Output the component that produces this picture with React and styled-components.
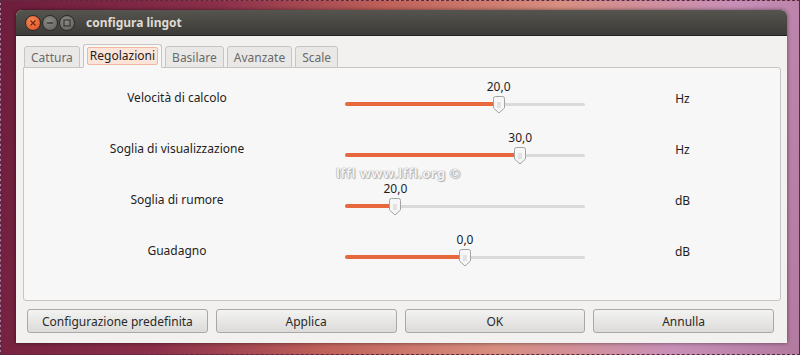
import React from 'react';
import styled, { createGlobalStyle } from 'styled-components';

const Global = createGlobalStyle`
  html, body { margin: 0; padding: 0; }
  body {
    width: 800px;
    height: 355px;
    overflow: hidden;
    font-family: "Noto Sans", "DejaVu Sans", sans-serif;
  }
`;

const Desktop = styled.div`
  box-sizing: border-box;
  width: 800px;
  height: 355px;
  border: 1px dashed #5a2a40;
  padding: 9px 12px 11px 15px;
  background: linear-gradient(100deg, #6e1d3c 0%, #8a2f4a 25%, #c0625a 45%, #d88f80 65%, #c890b8 85%, #b37aa0 100%);
`;

const Window = styled.div`
  display: flex;
  flex-direction: column;
  height: 333px;
  border-radius: 6px 6px 0 0;
  overflow: hidden;
  background: #f2f1f0;
  box-shadow: 0 0 4px rgba(0, 0, 0, 0.5);
`;

const TitleBar = styled.div`
  display: flex;
  align-items: center;
  height: 25px;
  padding: 0 0 0 9px;
  background: linear-gradient(#55544f, #3c3b37);
  border-bottom: 1px solid #222;
`;

const WinButton = styled.span`
  width: 14px;
  height: 14px;
  border-radius: 50%;
  margin-right: 1px;
  display: flex;
  align-items: center;
  justify-content: center;
  background: ${p => (p.close ? 'radial-gradient(circle at 40% 35%, #f58a5a, #df4a1a)' : 'radial-gradient(circle at 40% 35%, #8a8984, #5f5e5a)')};
  border: 1px solid #2d2c29;
`;

const Title = styled.span`
  margin-left: 10px;
  color: #dfdbd2;
  font-weight: bold;
  font-size: 12px;
`;

const Body = styled.div`
  flex: 1;
  display: flex;
  flex-direction: column;
  padding: 8px 6px 10px 7px;
  position: relative;
`;

const Tabs = styled.div`
  display: flex;
  gap: 3px;
  height: 23px;
  align-items: flex-end;
  margin-left: 1px;
  position: relative;
  z-index: 1;
`;

const Tab = styled.div`
  box-sizing: border-box;
  height: ${p => (p.active ? '24px' : '22px')};
  padding: ${p => (p.active ? '2px 3px' : '3px 6px')};
  border: 1px solid #c6c5c2;
  border-bottom: ${p => (p.active ? '1px solid #f7f7f7' : '1px solid #c6c5c2')};
  border-radius: 3px 3px 0 0;
  background: ${p => (p.active ? '#f7f7f7' : '#e9e8e6')};
  color: ${p => (p.active ? '#1e1e1e' : '#6a6a6a')};
  font-size: 12px;
  line-height: 16px;
  margin-bottom: -1px;
`;

const TabLabel = styled.span`
  display: inline-block;
  padding: 0 2px;
  background: #fce4d9;
  border: 1px solid #f1b79e;
  border-radius: 2px;
  line-height: 16px;
`;

const Panel = styled.div`
  flex: 1;
  background: #f7f7f7;
  border: 1px solid #c6c5c2;
  border-radius: 0 3px 3px 3px;
  display: flex;
  flex-direction: column;
  padding-top: 5px;
  position: relative;
`;

const Row = styled.div`
  display: grid;
  grid-template-columns: 306px 240px 1fr;
  column-gap: 15px;
  height: 51px;
  align-items: center;
`;

const Label = styled.div`
  text-align: center;
  font-size: 12px;
  color: #1e1e1e;
  padding-bottom: 2px;
`;

const Unit = styled.div`
  text-align: center;
  font-size: 12px;
  color: #1e1e1e;
  margin-left: -15px;
`;

const SliderBox = styled.div`
  position: relative;
  height: 51px;
`;

const Value = styled.span`
  position: absolute;
  top: 5px;
  transform: translateX(-50%);
  font-size: 12px;
  color: #1e1e1e;
`;

const Track = styled.div`
  position: absolute;
  left: 0;
  right: 0;
  top: 30px;
  height: 3px;
  border-radius: 2px;
  background: #dadad8;
`;

const Fill = styled.div`
  position: absolute;
  left: 0;
  top: 29px;
  height: 4px;
  border-radius: 2px;
  background: #e8683e;
`;

const Knob = styled.svg`
  position: absolute;
  top: 23px;
  transform: translateX(-50%);
`;

const Watermark = styled.div`
  position: absolute;
  left: 312px;
  top: 96px;
  font-size: 13px;
  font-weight: bold;
  color: #f4f4f4;
  letter-spacing: 0.5px;
  text-shadow: 0 0 1px #9a9a9a, 0 0 1px #9a9a9a, 1px 1px 1px #b8b8b8;
  pointer-events: none;
`;

const Buttons = styled.div`
  display: grid;
  grid-template-columns: repeat(4, 1fr);
  gap: 8px;
  margin-top: 8px;
  padding: 0 7px 0 4px;
`;

const Button = styled.div`
  height: 24px;
  box-sizing: border-box;
  border: 1px solid #a9a8a5;
  border-radius: 3px;
  background: linear-gradient(#f3f3f2, #dcdbd9);
  display: flex;
  align-items: center;
  justify-content: center;
  font-size: 12px;
  color: #2a2a2a;
  white-space: nowrap;
`;

const rows = [
  { label: 'Velocità di calcolo', value: '20,0', pos: 0.64, unit: 'Hz' },
  { label: 'Soglia di visualizzazione', value: '30,0', pos: 0.73, unit: 'Hz' },
  { label: 'Soglia di rumore', value: '20,0', pos: 0.21, unit: 'dB' },
  { label: 'Guadagno', value: '0,0', pos: 0.5, unit: 'dB' },
];

function Slider({ value, pos }) {
  const x = pos * 240;
  return (
    <SliderBox>
      <Value style={{ left: x }}>{value}</Value>
      <Track />
      <Fill style={{ width: x }} />
      <Knob width="12" height="18" viewBox="0 0 12 18" style={{ left: x }}>
        <path d="M2.5 0.5 H9.5 Q11.5 0.5 11.5 2.5 V12 L6 17 L0.5 12 V2.5 Q0.5 0.5 2.5 0.5 Z" fill="#f6f6f6" stroke="#a3a3a1" />
        <path d="M4 7 H8 M4 9 H8 M4 11 H8" stroke="#c4c4c2" strokeWidth="0.8" />
      </Knob>
    </SliderBox>
  );
}

export default function App() {
  return (
    <>
      <Global />
      <Desktop>
        <Window>
          <TitleBar>
            <WinButton close>
              <svg width="8" height="8" viewBox="0 0 8 8">
                <path d="M1.5 1.5 L6.5 6.5 M6.5 1.5 L1.5 6.5" stroke="#7a2a10" strokeWidth="1.4" />
              </svg>
            </WinButton>
            <WinButton>
              <svg width="8" height="8" viewBox="0 0 8 8">
                <path d="M1 4 H7" stroke="#3a3a37" strokeWidth="1.4" />
              </svg>
            </WinButton>
            <WinButton>
              <svg width="8" height="8" viewBox="0 0 8 8">
                <rect x="1" y="1" width="6" height="6" fill="none" stroke="#3a3a37" strokeWidth="1.2" />
              </svg>
            </WinButton>
            <Title>configura lingot</Title>
          </TitleBar>
          <Body>
            <Tabs>
              <Tab>Cattura</Tab>
              <Tab active><TabLabel>Regolazioni</TabLabel></Tab>
              <Tab>Basilare</Tab>
              <Tab>Avanzate</Tab>
              <Tab>Scale</Tab>
            </Tabs>
            <Panel>
              {rows.map(r => (
                <Row key={r.label}>
                  <Label>{r.label}</Label>
                  <Slider value={r.value} pos={r.pos} />
                  <Unit>{r.unit}</Unit>
                </Row>
              ))}
              <Watermark>lffl www.lffl.org ©</Watermark>
            </Panel>
            <Buttons>
              <Button>Configurazione predefinita</Button>
              <Button>Applica</Button>
              <Button>OK</Button>
              <Button>Annulla</Button>
            </Buttons>
          </Body>
        </Window>
      </Desktop>
    </>
  );
}
